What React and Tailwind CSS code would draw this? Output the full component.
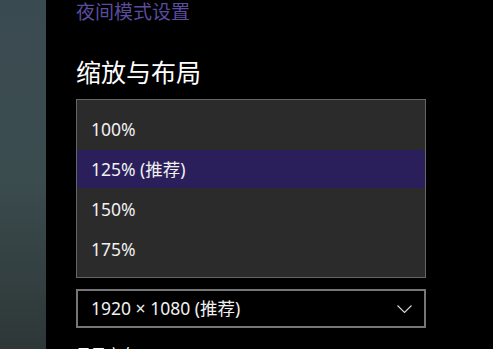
export default function App() {
  const options = ['100%', '125% (推荐)', '150%', '175%']
  const selected = 1

  return (
    <div
      className="flex h-[349px] w-[493px] overflow-hidden bg-black text-[#f0f0f0]"
      style={{ fontFamily: '"Noto Sans", "Noto Sans CJK SC", sans-serif' }}
    >
      {/* wallpaper strip */}
      <div className="h-full w-[46px] shrink-0 bg-gradient-to-b from-[#3a4a51] via-[#3b4c4f] to-[#2e3737]" />

      <div className="flex w-[350px] flex-col pl-[30px] [&>*]:shrink-0">
        <div className="mt-[-2px] h-[28px] text-[19px] leading-[28px] text-[#5a4c9e]">夜间模式设置</div>

        <h2 className="mt-[30px] h-[36px] text-[25px] leading-[32px] text-white">缩放与布局</h2>

        {/* open scale list */}
        <div className="mt-[7px] flex h-[179px] w-[350px] flex-col border border-[#666666] bg-[#2b2b2b] pt-[9px]">
          {options.map((o, i) => (
            <div
              key={o}
              className={
                'my-[1px] flex h-[38px] shrink-0 items-center px-[14px] text-[17.5px] ' +
                (i === selected ? 'bg-[#2a1f5b]' : '')
              }
            >
              {o}
            </div>
          ))}
        </div>

        {/* resolution combo */}
        <div className="mt-[11px] flex h-[39px] w-[350px] items-center justify-between border-2 border-[#767676] pl-[13px] pr-[12px] text-[17.5px]">
          <span>1920 × 1080 (推荐)</span>
          <svg width="15" height="8" viewBox="0 0 15 8" fill="none">
            <path d="M0.5 0.5 L7.5 7.5 L14.5 0.5" stroke="#d8d8d8" strokeWidth="1.1" />
          </svg>
        </div>

        <div className="mt-[16px] text-[15px] leading-[20px] text-white">显示方向</div>
      </div>
    </div>
  )
}
